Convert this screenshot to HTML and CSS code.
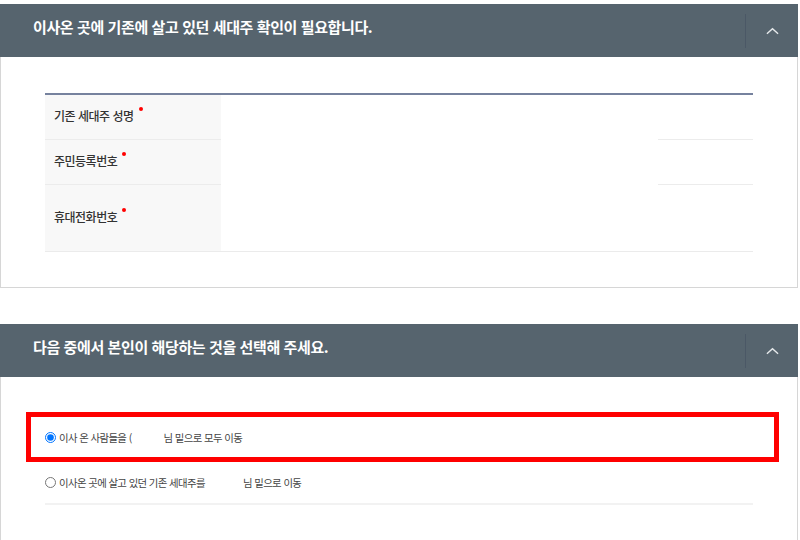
FILE: index.html
```html
<!DOCTYPE html>
<html lang="ko">
<head>
  <meta charset="UTF-8">
  <meta name="viewport" content="width=device-width, initial-scale=1.0">
  <title>세대주 확인</title>
  <link rel="stylesheet" href="styles.css">
</head>
<body>
  <div class="panel">
    <div class="panel-head">
      <h3>이사온 곳에 기존에 살고 있던 세대주 확인이 필요합니다.</h3>
      <button type="button" class="toggle" aria-label="접기">
        <svg viewBox="0 0 14 8"><polyline points="1,7 7,1.5 13,7"/></svg>
      </button>
    </div>
    <div class="panel-body">
      <div class="form-table">
        <div class="row">
          <div class="th req">기존 세대주 성명</div>
          <div class="td"></div>
          <div class="td-end"></div>
        </div>
        <div class="row">
          <div class="th req">주민등록번호</div>
          <div class="td"></div>
          <div class="td-end"></div>
        </div>
        <div class="row row-last">
          <div class="th req">휴대전화번호</div>
          <div class="td"></div>
          <div class="td-end"></div>
        </div>
      </div>
    </div>
  </div>

  <div class="panel">
    <div class="panel-head">
      <h3>다음 중에서 본인이 해당하는 것을 선택해 주세요.</h3>
      <button type="button" class="toggle" aria-label="접기">
        <svg viewBox="0 0 14 8"><polyline points="1,7 7,1.5 13,7"/></svg>
      </button>
    </div>
    <div class="panel-body panel-body-open">
      <div class="options">
        <div class="mark">
          <label class="option">
            <input type="radio" name="move" checked>
            <span>이사 온 사람들을 (</span><span class="blank"></span><span>님 밑으로 모두 이동</span>
          </label>
        </div>
        <label class="option option-line">
          <input type="radio" name="move">
          <span>이사온 곳에 살고 있던 기존 세대주를</span><span class="blank"></span><span>님 밑으로 이동</span>
        </label>
      </div>
    </div>
  </div>
</body>
</html>
```

FILE: styles.css
```css
* {
  margin: 0;
  padding: 0;
  box-sizing: border-box;
}

body {
  font-family: 'Noto Sans CJK KR', 'Noto Sans', sans-serif;
  background-color: #fff;
  color: #333;
  padding-top: 4px;
  padding-bottom: 60px;
}

.panel {
  width: 798px;
}

.panel + .panel {
  margin-top: 36px;
}

.panel-head {
  display: flex;
  align-items: center;
  height: 53px;
  background-color: #56646e;
}

.panel-head h3 {
  flex: 1;
  padding: 0 0 8px 33px;
  font-size: 15px;
  font-weight: 700;
  letter-spacing: -0.4px;
  color: #fff;
}

.toggle {
  display: flex;
  align-items: center;
  justify-content: center;
  width: 53px;
  height: 34px;
  border: none;
  border-left: 1px solid #4b5866;
  background: transparent;
  cursor: pointer;
}

.toggle svg {
  width: 13px;
  height: 8px;
  fill: none;
  stroke: #e6e9eb;
  stroke-width: 1.5;
}

.panel-body {
  padding: 36px 44px 35px 44px;
  border: 1px solid #d6d6d6;
  border-top: none;
}

.panel-body-open {
  border-bottom: none;
  padding: 35px 44px 0 44px;
  min-height: 200px;
}

/* 입력 표 */
.form-table {
  border-top: 2px solid #76829e;
}

.row {
  display: grid;
  grid-template-columns: 176px 437px 1fr;
  height: 45px;
}

.row-last {
  height: 67px;
  border-bottom: 1px solid #ebebeb;
}

.th {
  display: flex;
  align-items: center;
  padding: 0 0 4px 9px;
  background-color: #f8f8f8;
  font-size: 12px;
  font-weight: 500;
  letter-spacing: -0.5px;
  color: #333;
  border-bottom: 1px solid #ececec;
}

.td-end {
  border-bottom: 1px solid #ececec;
}

.row-last .th,
.row-last .td-end {
  border-bottom: none;
}

.req::after {
  content: "";
  width: 4px;
  height: 4px;
  margin: 0 0 12px 5px;
  border-radius: 50%;
  background-color: #f00;
}

/* 선택 항목 */
.mark {
  margin: 0 -26px 0 -19px;
  padding-left: 14px;
  height: 50px;
  border: 5px solid #f00;
  display: flex;
  align-items: center;
}

.option {
  display: flex;
  align-items: center;
  font-size: 10.4px;
  letter-spacing: -0.6px;
  color: #444;
  cursor: pointer;
}

.option-line {
  height: 43px;
  border-bottom: 2px solid #f2f2f2;
}

.option input {
  width: 11px;
  height: 11px;
  margin: 0 3px 0 0;
}

.blank {
  display: inline-block;
  width: 32px;
}

.option-line .blank {
  width: 38px;
}
```
